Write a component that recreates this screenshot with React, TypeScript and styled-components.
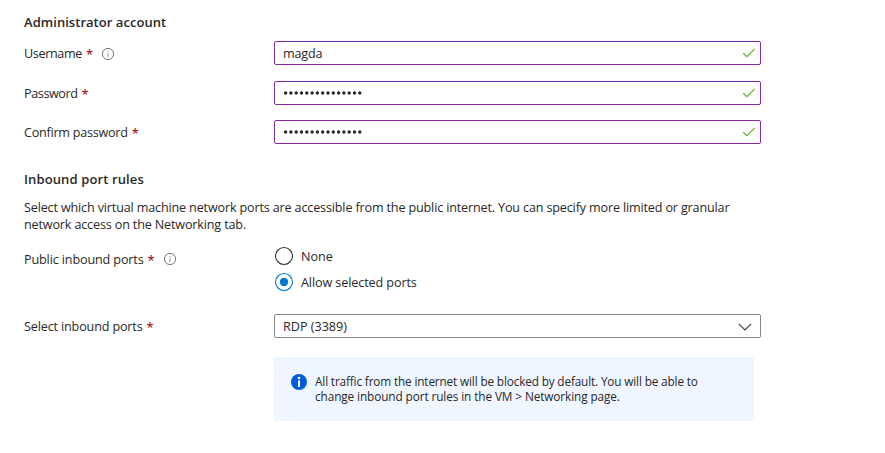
import React from "react";
import styled, { createGlobalStyle } from "styled-components";

const GlobalStyle = createGlobalStyle`
  * { box-sizing: border-box; }
  body {
    margin: 0;
    background: #fff;
    color: #292827;
    font-family: "Open Sans", "Noto Sans", sans-serif;
    font-size: 12.6px;
  }
`;

const Page = styled.main`
  width: 885px;
  height: 453px;
  padding: 12px 0 0 24px;
  overflow: hidden;
`;

const Heading = styled.h3<{ $gap?: number }>`
  margin: ${(p) => p.$gap ?? 0}px 0 0;
  height: 20px;
  font-size: 13px;
  font-weight: 600;
  line-height: 20px;
`;

const Row = styled.div<{ $gap: number }>`
  display: grid;
  grid-template-columns: 250px 487px;
  margin-top: ${(p) => p.$gap}px;
`;

const Label = styled.label<{ $drop?: number }>`
  display: flex;
  align-items: center;
  height: 24px;
  margin-top: ${(p) => p.$drop ?? 1}px;
  line-height: 24px;
  white-space: nowrap;
`;

const Star = styled.span`
  width: 7px;
  margin-left: 4px;
  color: #a4262c;
  font-size: 13px;
  font-weight: 600;
`;

const Hint = styled.svg<{ $lift?: number }>`
  margin-left: 8px;
  margin-bottom: ${(p) => p.$lift ?? 0}px;
  width: 14px;
  height: 14px;
`;

const Text = styled.span<{ $track?: number }>`
  letter-spacing: ${(p) => p.$track ?? 0}px;
  white-space: nowrap;
`;

const Field = styled.div<{ $color: string }>`
  display: flex;
  align-items: center;
  justify-content: space-between;
  height: 24px;
  padding: 0 5px 0 8px;
  border: 1px solid ${(p) => p.$color};
  border-radius: 2px;
  line-height: 22px;
`;

const Value = styled(Text)`
  padding-top: 2px;
`;

const Dots = styled.svg`
  width: 80px;
  height: 6px;
  margin-bottom: 1px;
`;

const Check = styled.svg`
  width: 13px;
  height: 10px;
`;

const Chevron = styled.svg`
  width: 14px;
  height: 8px;
  margin-right: 3px;
  margin-top: 1px;
`;

const Intro = styled.p`
  margin: 10px 0 0;
  line-height: 17px;
`;

const Line = styled.span<{ $track?: number }>`
  display: block;
  white-space: nowrap;
  letter-spacing: ${(p) => p.$track ?? 0}px;
`;

const Radios = styled.div`
  display: grid;
  gap: 6px;
`;

const Radio = styled.div`
  display: flex;
  align-items: center;
  gap: 7px;
  height: 20px;
`;

const RadioMark = styled.svg`
  width: 20px;
  height: 20px;
`;

const Note = styled.aside`
  display: flex;
  align-items: flex-start;
  gap: 8px;
  width: 480px;
  height: 64px;
  margin: 18px 0 0 250px;
  padding: 16px 17px;
  border-radius: 2px;
  background: #eff6ff;
  font-size: 11.8px;
  line-height: 15px;
`;

const NoteText = styled.div`
  padding-top: 1px;
`;

const NoteIcon = styled.svg`
  width: 16px;
  height: 16px;
  margin-top: 1px;
`;

function InfoHint({ lift }: { lift?: number }) {
  return (
    <Hint $lift={lift} viewBox="0 0 14 14">
      <circle cx="7" cy="7" r="5.6" fill="none" stroke="#6b6967" strokeWidth="0.9" />
      <path d="M7 6.2V10M7 4V5.1" stroke="#8a8886" />
    </Hint>
  );
}

function Password() {
  return (
    <Dots viewBox="0 0 80 6" role="img" aria-label="Password hidden">
      {Array.from({ length: 15 }, (_, i) => (
        <circle key={i} cx={2.6 + i * 5.3} cy="3" r="1.7" fill="#292827" />
      ))}
    </Dots>
  );
}

function Valid() {
  return (
    <Check viewBox="0 0 13 10">
      <path d="M1.2 5.2L4.9 8.6L12.7 1" fill="none" stroke="#6bb02c" strokeWidth="1.2" />
    </Check>
  );
}

interface LabelProps {
  text: string;
  track?: number;
  hint?: boolean;
  drop?: number;
  lift?: number;
}

function RequiredLabel({ text, track, hint, drop, lift }: LabelProps) {
  return (
    <Label $drop={drop}>
      <Text $track={track}>{text}</Text>
      <Star>*</Star>
      {hint && <InfoHint lift={lift} />}
    </Label>
  );
}

export default function App() {
  return (
    <>
      <GlobalStyle />
      <Page>
        <Heading>
          <Text $track={0.04}>Administrator account</Text>
        </Heading>
        <Row $gap={9}>
          <RequiredLabel text="Username" track={-0.36} hint />
          <Field $color="#8a27a3">
            <Value $track={-0.15}>magda</Value>
            <Valid />
          </Field>
        </Row>
        <Row $gap={15}>
          <RequiredLabel text="Password" track={-0.4} />
          <Field $color="#8a27a3">
            <Password />
            <Valid />
          </Field>
        </Row>
        <Row $gap={14}>
          <RequiredLabel text="Confirm password" track={-0.25} />
          <Field $color="#8a27a3">
            <Password />
            <Valid />
          </Field>
        </Row>
        <Heading $gap={24}>
          <Text $track={0.12}>Inbound port rules</Text>
        </Heading>
        <Intro>
          <Line $track={-0.157}>
            Select which virtual machine network ports are accessible from the public internet. You can specify more limited or granular
          </Line>
          <Line $track={-0.157}>network access on the Networking tab.</Line>
        </Intro>
        <Row $gap={13}>
          <RequiredLabel text="Public inbound ports" track={-0.13} hint drop={2} lift={2} />
          <Radios>
            <Radio>
              <RadioMark viewBox="0 0 20 20">
                <circle cx="10" cy="10" r="8.5" fill="none" stroke="#323130" strokeWidth="1.1" />
              </RadioMark>
              <Text>None</Text>
            </Radio>
            <Radio>
              <RadioMark viewBox="0 0 20 20">
                <circle cx="10" cy="10" r="8.5" fill="none" stroke="#0078d4" strokeWidth="1.1" />
                <circle cx="10" cy="10" r="4.2" fill="#0078d4" />
              </RadioMark>
              <Text $track={-0.1}>Allow selected ports</Text>
            </Radio>
          </Radios>
        </Row>
        <Row $gap={22}>
          <RequiredLabel text="Select inbound ports" track={-0.15} />
          <Field $color="#8a8886">
            <Value>RDP (3389)</Value>
            <Chevron viewBox="0 0 14 8">
              <path d="M0.8 0.8L7 7L13.2 0.8" fill="none" stroke="#3b3a39" strokeWidth="1.1" />
            </Chevron>
          </Field>
        </Row>
        <Note>
          <NoteIcon viewBox="0 0 16 16">
            <circle cx="8" cy="8" r="8" fill="#015cda" />
            <circle cx="8" cy="4" r="1.3" fill="#fff" />
            <path d="M8 6.5V13" stroke="#fff" strokeWidth="2" />
          </NoteIcon>
          <NoteText>
            <Line $track={-0.155}>All traffic from the internet will be blocked by default. You will be able to</Line>
            <Line $track={-0.1}>change inbound port rules in the VM &gt; Networking page.</Line>
          </NoteText>
        </Note>
      </Page>
    </>
  );
}
